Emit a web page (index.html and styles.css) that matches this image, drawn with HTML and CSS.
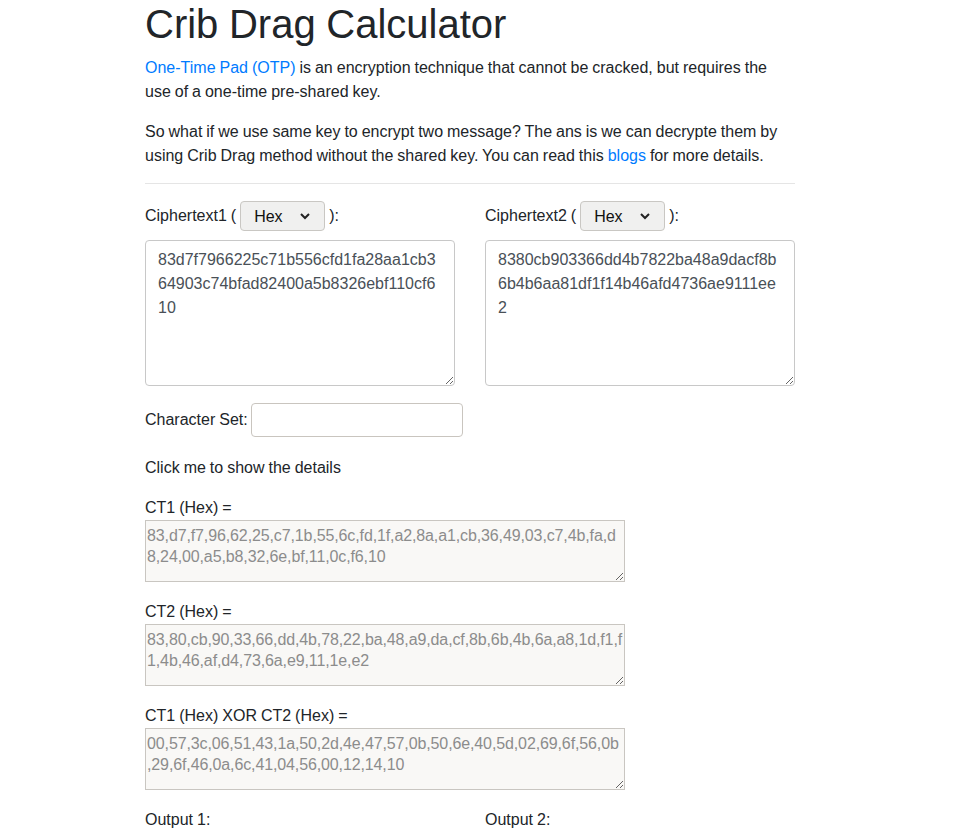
FILE: index.html
```html
<!DOCTYPE html>
<html>
<head>
<meta charset="utf-8">
<link rel="stylesheet" href="styles.css">
</head>
<body>
<div class="page">
  <h1 class="title">Crib Drag Calculator</h1>
  <p class="para"><a class="link" href="#">One-Time Pad (OTP)</a> is an encryption technique that cannot be cracked, but requires the use of a one-time pre-shared key.</p>
  <p class="para">So what if we use same key to encrypt two message? The ans is we can decrypte them by using Crib Drag method without the shared key. You can read this <a class="link" href="#">blogs</a> for more details.</p>
  <hr class="rule">
  <div class="cols">
    <div class="col">
      <div class="ct-label">Ciphertext1 (<span class="select"><span class="select-text">Hex</span><svg class="chev" width="12" height="8" viewBox="0 0 12 8"><path d="M2 2 L6 6 L10 2" fill="none" stroke="#222" stroke-width="2"/></svg></span>):</div>
      <textarea class="cipher">83d7f7966225c71b556cfd1fa28aa1cb364903c74bfad82400a5b8326ebf110cf610</textarea>
    </div>
    <div class="col">
      <div class="ct-label">Ciphertext2 (<span class="select"><span class="select-text">Hex</span><svg class="chev" width="12" height="8" viewBox="0 0 12 8"><path d="M2 2 L6 6 L10 2" fill="none" stroke="#222" stroke-width="2"/></svg></span>):</div>
      <textarea class="cipher">8380cb903366dd4b7822ba48a9dacf8b6b4b6aa81df1f14b46afd4736ae9111ee2</textarea>
    </div>
  </div>
  <div class="charset">Character Set:<input class="charset-input" type="text"></div>
  <div class="details">Click me to show the details</div>
  <div class="block">
    <div class="blabel">CT1 (Hex) =</div>
    <textarea class="ro" disabled>83,d7,f7,96,62,25,c7,1b,55,6c,fd,1f,a2,8a,a1,cb,36,49,03,c7,4b,fa,d
8,24,00,a5,b8,32,6e,bf,11,0c,f6,10</textarea>
  </div>
  <div class="block">
    <div class="blabel">CT2 (Hex) =</div>
    <textarea class="ro" disabled>83,80,cb,90,33,66,dd,4b,78,22,ba,48,a9,da,cf,8b,6b,4b,6a,a8,1d,f1,f
1,4b,46,af,d4,73,6a,e9,11,1e,e2</textarea>
  </div>
  <div class="block">
    <div class="blabel">CT1 (Hex) XOR CT2 (Hex) =</div>
    <textarea class="ro" disabled>00,57,3c,06,51,43,1a,50,2d,4e,47,57,0b,50,6e,40,5d,02,69,6f,56,0b
,29,6f,46,0a,6c,41,04,56,00,12,14,10</textarea>
  </div>
  <div class="cols outputs">
    <div class="col">Output 1:</div>
    <div class="col">Output 2:</div>
  </div>
</div>
</body>
</html>
```
FILE: styles.css
```css
html, body {
  margin: 0;
  padding: 0;
  background: #fff;
}
body {
  font-family: "Liberation Sans", Arial, sans-serif;
  font-size: 16px;
  line-height: 24px;
  color: #212529;
  overflow: hidden;
  word-spacing: -0.03em;
}
.page {
  width: 650px;
  margin-left: 145px;
  padding-top: 1px;
}
.title {
  font-size: 40px;
  font-weight: 500;
  line-height: 48px;
  margin: 0 0 8px;
  margin-top: -1px;
}
.para {
  margin: 0 0 16px;
}
.title + .para {
  margin-top: 1px;
}
.link {
  color: #007bff;
  text-decoration: none;
}
.rule {
  border: 0;
  border-top: 1px solid rgba(0,0,0,0.1);
  margin: 0 0 16px;
  margin-top: -1px;
}
.cols {
  display: grid;
  grid-template-columns: 310px 310px;
  column-gap: 30px;
}
.col {
  display: flex;
  flex-direction: column;
}
.ct-label {
  height: 30px;
  display: flex;
  align-items: center;
  margin-bottom: 9px;
  padding-top: 1px;
}
.select {
  display: inline-flex;
  align-items: center;
  box-sizing: border-box;
  width: 85px;
  height: 30px;
  margin: 0 4px 0 4px;
  padding-left: 13px;
  border: 1px solid #c9c7c3;
  border-radius: 4px;
  background: #f0f0ef;
  color: #111;
}
.select-text {
  flex: 1;
  padding-top: 1px;
}
.chev {
  margin-right: 13px;
}
.cipher {
  box-sizing: border-box;
  width: 310px;
  height: 146px;
  padding: 7px 12px 6px;
  border: 1px solid #c8c8c8;
  border-radius: 4px;
  font-family: "Liberation Sans", Arial, sans-serif;
  font-size: 16px;
  line-height: 24px;
  color: #495057;
  margin: 0;
  background: #fff;
  word-spacing: normal;
}
.charset {
  margin-top: 16px;
  display: flex;
  align-items: center;
  height: 34px;
  padding-top: 1px;
}
.charset-input {
  box-sizing: border-box;
  width: 212px;
  height: 34px;
  margin-left: 3px;
  margin-top: -1px;
  border: 1px solid #c9c5bf;
  border-radius: 4px;
  padding: 4px 8px;
  font-size: 16px;
  background: #fff;
}
.details {
  margin-top: 19px;
  margin-bottom: 16px;
}
.block {
  display: flex;
  flex-direction: column;
  margin-bottom: 18px;
}
.ro {
  box-sizing: border-box;
  width: 480px;
  height: 62px;
  padding: 4px 1px;
  margin: 0;
  border: 1px solid #c9c6c1;
  border-radius: 0;
  background: #f9f8f6;
  color: #8c8c8c;
  font-family: "Liberation Sans", Arial, sans-serif;
  font-size: 16px;
  line-height: 21px;
  letter-spacing: -0.12px;
  white-space: pre;
  overflow: hidden;
  word-spacing: normal;
}
.outputs {
  margin-top: 1px;
}
.outputs .col {
  display: block;
}
```
